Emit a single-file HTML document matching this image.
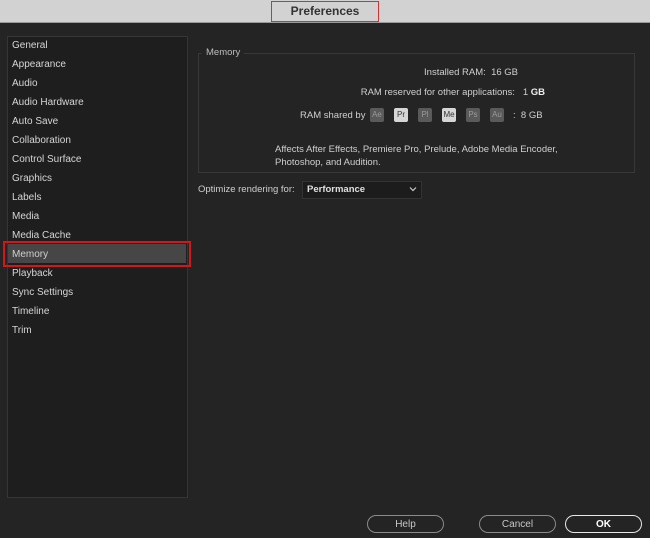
<!DOCTYPE html>
<html><head><style>
body{margin:0;width:650px;height:538px;background:#242424;font-family:"Liberation Sans",sans-serif;position:relative;overflow:hidden}
.a{position:absolute}
#title{left:0;top:0;width:650px;height:22px;background:#d2d2d2;border-bottom:1px solid #9a9a9a}
#tbox{left:271px;top:1px;width:106px;height:19px;border:1px solid #d83030;font-weight:bold;font-size:12px;color:#333;text-align:center;line-height:19px}
#side{left:7px;top:36px;width:179px;height:460px;background:#1e1e1e;border:1px solid #353535}
.it{position:absolute;left:12px;font-size:10px;color:#d6d6d6;line-height:12px}
#hl{left:8px;top:244px;width:178px;height:19px;background:#464646}
#red{left:3px;top:241px;width:184px;height:22px;border:2px solid #d4161c}
#grp{left:198px;top:53px;width:435px;height:118px;border:1px solid #383838}
.t{position:absolute;font-size:9.5px;color:#cfcfcf;white-space:nowrap}
.b{position:absolute;top:108px;width:14px;height:14px;border-radius:2px;font-size:8px;text-align:center;line-height:14px}
.btn{position:absolute;top:515px;height:16px;border:1.5px solid #8a8a8a;border-radius:9px;font-size:10px;color:#c8c8c8;text-align:center;line-height:18px}
</style></head><body>
<div class="a" id="title"></div>
<div class="a" id="tbox">Preferences</div>
<div class="a" id="side"></div>
<div class="a" id="hl"></div>
<div class="a" id="red"></div>
<div class="it" style="top:40px">General</div>
<div class="it" style="top:59px">Appearance</div>
<div class="it" style="top:78px">Audio</div>
<div class="it" style="top:97px">Audio Hardware</div>
<div class="it" style="top:116px">Auto Save</div>
<div class="it" style="top:135px">Collaboration</div>
<div class="it" style="top:154px">Control Surface</div>
<div class="it" style="top:173px">Graphics</div>
<div class="it" style="top:192px">Labels</div>
<div class="it" style="top:211px">Media</div>
<div class="it" style="top:230px">Media Cache</div>
<div class="it" style="top:249px;color:#cfcfcf">Memory</div>
<div class="it" style="top:268px">Playback</div>
<div class="it" style="top:287px">Sync Settings</div>
<div class="it" style="top:306px">Timeline</div>
<div class="it" style="top:325px">Trim</div>
<div class="a" id="grp"></div>
<div class="t" style="left:202px;top:47px;background:#242424;padding:0 4px;color:#bdbdbd">Memory</div>
<div class="t" style="right:132px;top:67px">Installed RAM:&nbsp; 16 GB</div>
<div class="t" style="right:105px;top:87px">RAM reserved for other applications:&nbsp;&nbsp; 1 <b style="color:#eee">GB</b></div>
<div class="t" style="left:300px;top:110px">RAM shared by</div>
<div class="b" style="left:370px;background:#5a5a5a;color:#999">Ae</div>
<div class="b" style="left:394px;background:#d6d6d6;color:#333">Pr</div>
<div class="b" style="left:418px;background:#5a5a5a;color:#999">Pl</div>
<div class="b" style="left:442px;background:#d6d6d6;color:#333">Me</div>
<div class="b" style="left:466px;background:#5a5a5a;color:#999">Ps</div>
<div class="b" style="left:490px;background:#5a5a5a;color:#999">Au</div>
<div class="t" style="left:513px;top:110px">:&nbsp; 8 GB</div>
<div class="t" style="left:275px;top:143px;line-height:13px">Affects After Effects, Premiere Pro, Prelude, Adobe Media Encoder,<br>Photoshop, and Audition.</div>
<div class="t" style="left:198px;top:184px">Optimize rendering for:</div>
<div class="a" style="left:302px;top:181px;width:118px;height:16px;background:#1c1c1c;border:1px solid #333"></div>
<div class="t" style="left:307px;top:184px;color:#e0e0e0;font-weight:bold;font-size:9.5px">Performance</div>
<svg class="a" style="left:409px;top:186px" width="8" height="6"><path d="M1 1.5L4 4.5L7 1.5" stroke="#ccc" fill="none" stroke-width="1.2"/></svg>
<div class="btn" style="left:367px;width:75px">Help</div>
<div class="btn" style="left:479px;width:75px">Cancel</div>
<div class="btn" style="left:565px;width:75px;border-color:#e8e8e8;color:#fff;font-weight:bold">OK</div>
</body></html>
